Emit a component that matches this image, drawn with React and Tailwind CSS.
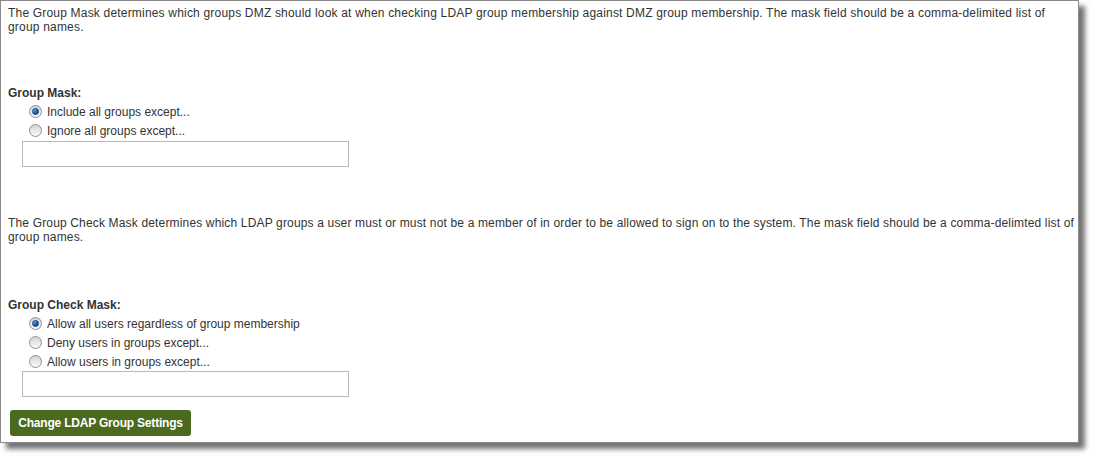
import { useState } from "react";

const Radio = ({ checked, label, onClick }) => (
  <div className="flex items-center h-[19px] pl-[21px] cursor-pointer" onClick={onClick}>
    <span className="w-[13px] h-[13px] rounded-full border border-[#8f8f8f] bg-gradient-to-b from-[#d4d4d4] to-[#fafafa] flex items-center justify-center">
      {checked && (
        <span className="w-[7px] h-[7px] rounded-full bg-gradient-to-br from-[#7fc3f5] via-[#1f6fc4] to-[#0b3f80] border border-[#0d3e78]" />
      )}
    </span>
    <span className="ml-[5px]">{label}</span>
  </div>
);

const MaskInput = ({ className = "" }) => (
  <div className={`pl-[14px] ${className}`}>
    <input
      type="text"
      className="block w-[327px] h-[26px] border border-[#b9b9b9] bg-white px-1 outline-none"
    />
  </div>
);

export default function App() {
  const [groupMask, setGroupMask] = useState(0);
  const [checkMask, setCheckMask] = useState(0);

  return (
    <div className="w-[1095px] h-[458px] bg-white font-['Liberation_Sans',Arial,sans-serif] text-[12px] leading-[14px] text-[#333]">
      <div className="w-[1079px] h-[443px] border border-[#8a8a8a] bg-white shadow-[6px_6px_5px_rgba(0,0,0,0.55)] pl-[7px] pt-[5px]">
        <p className="whitespace-nowrap tracking-[0.19px]">
          The Group Mask determines which groups DMZ should look at when checking LDAP group membership against DMZ group membership. The mask field should be a comma-delimited list of
          <br />
          group names.
        </p>

        <div className="mt-[52px] font-bold">Group Mask:</div>
        <div className="mt-[2px]">
          <Radio checked={groupMask === 0} label="Include all groups except..." onClick={() => setGroupMask(0)} />
          <Radio checked={groupMask === 1} label="Ignore all groups except..." onClick={() => setGroupMask(1)} />
        </div>
        <MaskInput className="mt-[1px]" />

        <p className="mt-[49px] whitespace-nowrap tracking-[0.16px]">
          The Group Check Mask determines which LDAP groups a user must or must not be a member of in order to be allowed to sign on to the system. The mask field should be a comma-delimted list of
          <br />
          group names.
        </p>

        <div className="mt-[54px] font-bold">Group Check Mask:</div>
        <div className="mt-[2px]">
          <Radio checked={checkMask === 0} label="Allow all users regardless of group membership" onClick={() => setCheckMask(0)} />
          <Radio checked={checkMask === 1} label="Deny users in groups except..." onClick={() => setCheckMask(1)} />
          <Radio checked={checkMask === 2} label="Allow users in groups except..." onClick={() => setCheckMask(2)} />
        </div>
        <MaskInput />

        <button className="mt-[13px] ml-[2px] h-[26px] w-[181px] rounded-[3px] bg-[#4b6a1f] text-white font-bold text-center tracking-[-0.2px]">
          Change LDAP Group Settings
        </button>
      </div>
    </div>
  );
}
